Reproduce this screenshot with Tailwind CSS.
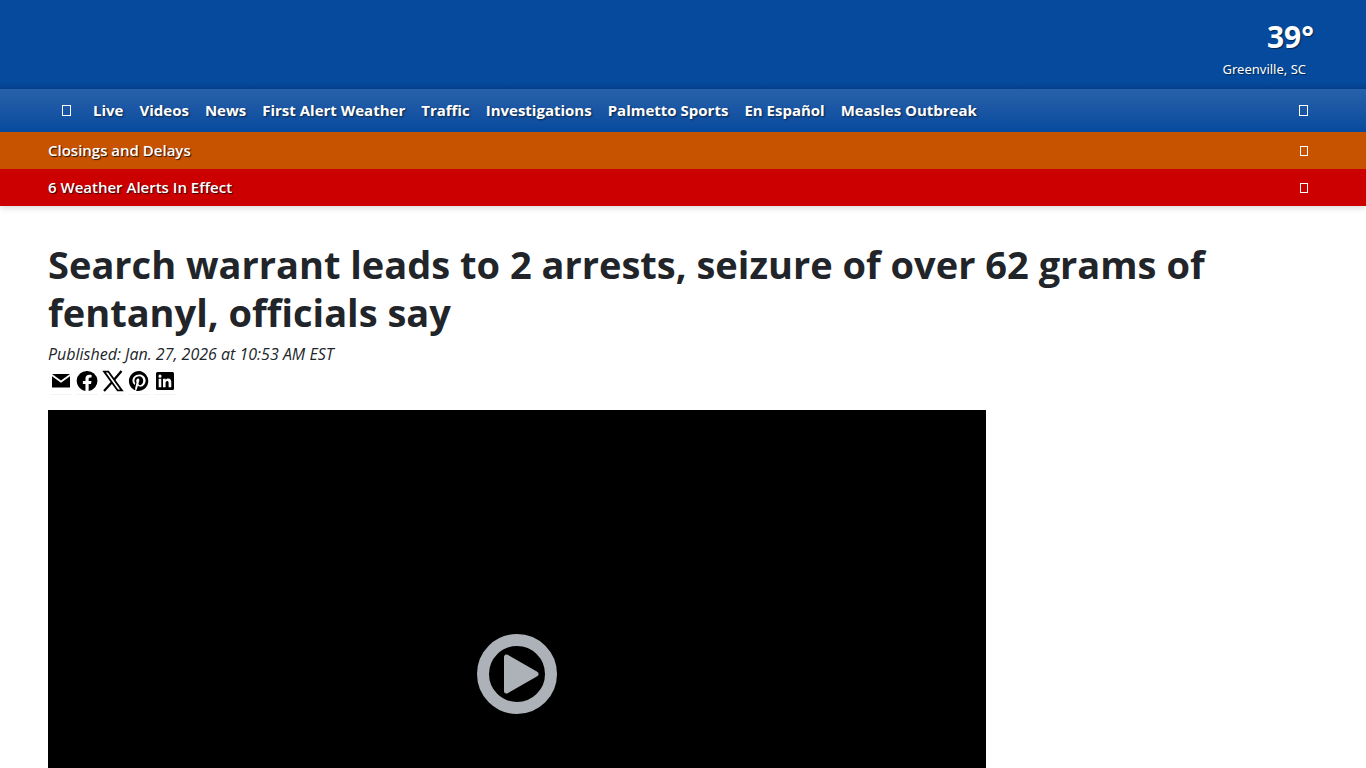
<!DOCTYPE html>
<html lang="en">
<head>
    <meta charset="UTF-8">
    <meta name="viewport" content="width=device-width, initial-scale=1.0">
    <title>Search warrant leads to 2 arrests, seizure of over 62 grams of fentanyl, officials say</title>
    <script src="https://cdn.jsdelivr.net/npm/@tailwindcss/browser@4"></script>
</head>
<body class="bg-white text-[#212529] font-['Open_Sans','Noto_Sans',sans-serif] overflow-x-hidden">
    <header class="relative shadow-[0_2px_6px_rgba(0,0,0,0.15)] text-white">
        <!-- Current conditions -->
        <div class="h-[89px] bg-[#064a9e] bg-linear-to-b from-[#064a9e] from-92% to-[#043f8c] px-12 flex justify-end">
            <a href="#" class="mt-[19px] mr-1 flex flex-col items-end text-shadow-[1px_1px_1px_rgba(0,0,0,0.5)]">
                <span class="text-[30px] leading-9 font-bold font-['Noto_Sans',sans-serif]">39°</span>
                <span class="mr-2 mt-1 text-[13px] leading-5 font-['Noto_Sans',sans-serif]">Greenville, SC</span>
            </a>
        </div>

        <!-- Main navigation -->
        <nav class="h-[43px] bg-linear-to-b from-[#2861aa] to-[#064a9e] px-12 flex items-center text-[15px] font-bold text-shadow-[1px_1px_2px_rgba(0,0,0,0.6)]">
            <button type="button" aria-label="Home" class="ml-[14px] mr-[22px] h-[11px] w-[9px] border border-white"></button>
            <ul class="flex gap-4 whitespace-nowrap">
                <li><a href="#">Live</a></li>
                <li><a href="#">Videos</a></li>
                <li><a href="#">News</a></li>
                <li><a href="#">First Alert Weather</a></li>
                <li><a href="#">Traffic</a></li>
                <li><a href="#">Investigations</a></li>
                <li><a href="#">Palmetto Sports</a></li>
                <li><a href="#">En Español</a></li>
                <li><a href="#">Measles Outbreak</a></li>
            </ul>
            <button type="button" aria-label="Search" class="ml-auto mr-[10px] h-[11px] w-[9px] border border-white"></button>
        </nav>

        <!-- Alert bars -->
        <a href="#" class="h-[37px] bg-[#c75300] px-12 flex items-center justify-between text-[15px] font-semibold text-shadow-[1px_1px_1px_rgba(0,0,0,0.8)]">
            Closings and Delays
            <span class="mr-[10px] h-[10px] w-2 border border-white"></span>
        </a>
        <a href="#" class="h-[37px] bg-[#cc0000] px-12 flex items-center justify-between text-[15px] font-semibold text-shadow-[1px_1px_1px_rgba(0,0,0,0.8)]">
            6 Weather Alerts In Effect
            <span class="mr-[10px] h-[10px] w-2 border border-white"></span>
        </a>
    </header>

    <main class="px-12 pt-[34px]">
        <h1 class="text-[38px] leading-12 font-bold">Search warrant leads to 2 arrests, seizure of over 62 grams of fentanyl, officials say</h1>
        <p class="mt-[6px] text-[16px] leading-6 italic">Published: Jan. 27, 2026 at 10:53 AM EST</p>

        <!-- Share links -->
        <div class="ml-[2px] flex gap-1 text-black">
            <a href="#" aria-label="Email" class="pt-1 pb-[2px] border-b border-gray-100">
                <svg class="size-[22px]" viewBox="0 0 22 22" fill="currentColor"><path d="M2 4h18L11 10.500z"/><path d="M2 6.200L11 12.800L20 6.200V17.500H2z"/></svg>
            </a>
            <a href="#" aria-label="Facebook" class="pt-1 pb-[2px] border-b border-gray-100">
                <svg class="size-[22px]" viewBox="0 0 24 24" fill="currentColor"><path d="M12 1a11 11 0 0 0-1.700 21.900v-7.700H7.500V12h2.800V9.600c0-2.800 1.600-4.300 4.200-4.300 1.200 0 2.500.2 2.500.2v2.700h-1.400c-1.400 0-1.800.9-1.800 1.700V12h3.100l-.5 3.200h-2.600v7.700A11 11 0 0 0 12 1z"/></svg>
            </a>
            <a href="#" aria-label="X" class="pt-1 pb-[2px] border-b border-gray-100">
                <svg class="size-[22px]" viewBox="0 0 24 24" fill="none" stroke="currentColor" stroke-width="2"><path d="M2.300 1.700h4.600l14.800 20.600h-4.600z"/><path d="M21.300 1.100 13.400 10.300M10.600 13.600 2.200 23" stroke-width="2.500"/></svg>
            </a>
            <a href="#" aria-label="Pinterest" class="pt-1 pb-[2px] border-b border-gray-100">
                <svg class="size-[22px]" viewBox="0 0 24 24" fill="currentColor"><path d="M12 1C5.900 1 1 5.900 1 12c0 4.700 2.900 8.600 7 10.200-.1-.9-.2-2.200 0-3.200l1.300-5.500s-.3-.7-.3-1.600c0-1.500.9-2.700 2-2.700.9 0 1.400.7 1.400 1.600 0 .9-.6 2.400-.9 3.700-.3 1.100.5 2 1.600 2 2 0 3.500-2.100 3.500-5.100 0-2.600-1.900-4.500-4.600-4.500-3.200 0-5 2.400-5 4.800 0 1 .4 2 .8 2.500.1.1.1.2.1.3l-.3 1.300c-.1.200-.2.300-.4.200-1.400-.7-2.300-2.700-2.300-4.400 0-3.500 2.600-6.800 7.400-6.800 3.900 0 6.900 2.800 6.900 6.500 0 3.900-2.400 7-5.800 7-1.100 0-2.200-.6-2.600-1.300l-.7 2.700c-.3 1-1 2.200-1.400 3A11 11 0 1 0 12 1z"/></svg>
            </a>
            <a href="#" aria-label="LinkedIn" class="pt-1 pb-[2px] border-b border-gray-100">
                <svg class="size-[22px]" viewBox="0 0 22 22" fill="currentColor" fill-rule="evenodd"><path d="M3.500 2h15A1.500 1.500 0 0 1 20 3.500v15a1.500 1.500 0 0 1-1.500 1.500h-15A1.500 1.500 0 0 1 2 18.500v-15A1.500 1.500 0 0 1 3.500 2zM4.700 8.800v8.500h2.600V8.800zM6 4.600a1.500 1.500 0 1 0 0 3.100 1.500 1.500 0 0 0 0-3.100zM9 8.800v8.500h2.600v-4.200c0-1.200.3-2.200 1.600-2.200s1.400 1.200 1.400 2.300v4.100h2.700v-4.700c0-2.300-.5-4-3.200-4-1.300 0-2.100.7-2.500 1.400V8.800z"/></svg>
            </a>
        </div>

        <!-- Video player -->
        <div class="mt-[15px] w-[938px] max-w-full aspect-video bg-black flex items-center justify-center">
            <button type="button" aria-label="Play video" class="size-20 text-[#adb2b8]">
                <svg class="size-20" viewBox="0 0 80 80" fill="currentColor"><circle cx="40" cy="40" r="34" fill="none" stroke="currentColor" stroke-width="12"/><path d="M29.500 23v34L59 40z" stroke="currentColor" stroke-width="5" stroke-linejoin="round"/></svg>
            </button>
        </div>
    </main>
</body>
</html>
